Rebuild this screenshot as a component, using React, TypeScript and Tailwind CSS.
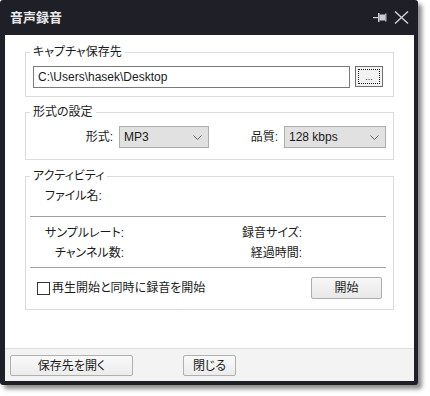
import React from "react";

function Chevron() {
  return (
    <svg width="9" height="5" viewBox="0 0 9 5" className="shrink-0">
      <path d="M0.5 0.5 L4.5 4.5 L8.5 0.5" fill="none" stroke="#606060" strokeWidth="1" />
    </svg>
  );
}

function Select({ value, w }: { value: string; w: string }) {
  return (
    <div className={`${w} h-[22px] bg-[#e1e1e1] border border-[#adadad] flex items-center pl-[4px] pr-[6px] justify-between`}>
      <span className="text-[12px] text-[#1a1a1a] leading-none">{value}</span>
      <Chevron />
    </div>
  );
}

export default function App() {
  return (
    <div className="w-[430px] h-[396px] bg-white font-['Liberation_Sans','Noto_Sans_CJK_JP',sans-serif] text-[12px] text-[#1a1a1a] [font-feature-settings:'palt']">
      <div className="w-[418px] h-[385px] bg-[#1f2027] rounded-[3px] flex flex-col pl-[5px] pr-[4px] pb-[4px] shadow-[4px_4px_4px_rgba(0,0,0,0.45)]">
        {/* Title bar */}
        <div className="h-[35px] shrink-0 flex items-center pl-[5px] pr-[5px] text-[#e9e9ec]">
          <span className="font-bold text-[13px] leading-none">音声録音</span>
          <div className="ml-auto flex items-center gap-[7px]">
            <svg width="14" height="11" viewBox="0 0 14 11">
              <rect x="0" y="5" width="5" height="1.2" fill="#cfcfd2" />
              <rect x="5" y="1" width="1.5" height="9" fill="#cfcfd2" />
              <rect x="6.5" y="2.5" width="5.5" height="6" fill="#cfcfd2" />
              <rect x="12" y="1.5" width="1.5" height="8" fill="#a9a9ad" />
            </svg>
            <svg width="15" height="13" viewBox="0 0 15 13">
              <path d="M1 0.5 L14 12.5 M14 0.5 L1 12.5" stroke="#d2d2d6" strokeWidth="1.4" fill="none" />
            </svg>
          </div>
        </div>

        {/* Content */}
        <div className="flex-1 bg-white flex flex-col">
          <div className="flex-1 px-[20px] pt-[10px]">
            {/* Group 1 */}
            <fieldset className="border border-[#dcdcdc] px-0">
              <legend className="ml-[4px] px-[3px] leading-[14px] text-[12px]">キャプチャ保存先</legend>
              <div className="pt-[7px] pl-[7px] pr-[10px] pb-[8px] flex items-start">
                <div className="w-[317px] h-[22px] border border-[#7a7a7a] flex items-center pl-[4px]">
                  <span className="text-[12px] leading-none [font-feature-settings:normal]">C:\Users\hasek\Desktop</span>
                </div>
                <div className="ml-[5px] w-[28px] h-[21px] border border-[#707070] bg-[#f2f2f2] p-[2px]">
                  <div className="w-full h-full border border-dotted border-[#1a1a1a] flex items-end justify-center">
                    <span className="text-[9px] leading-[11px] tracking-[0px]">...</span>
                  </div>
                </div>
              </div>
            </fieldset>

            {/* Group 2 */}
            <fieldset className="border border-[#dcdcdc] px-0 mt-[8px]">
              <legend className="ml-[4px] px-[3px] leading-[14px] text-[12px]">形式の設定</legend>
              <div className="pt-[7px] pb-[11px] flex items-center">
                <span className="w-[87px] text-right leading-none">形式:</span>
                <div className="ml-[6px]">
                  <Select value="MP3" w="w-[90px]" />
                </div>
                <span className="w-[69px] text-right leading-none">品質:</span>
                <div className="ml-[6px]">
                  <Select value="128 kbps" w="w-[102px]" />
                </div>
              </div>
            </fieldset>

            {/* Group 3 */}
            <fieldset className="border border-[#dcdcdc] px-0 mt-[9px]">
              <legend className="ml-[4px] px-[3px] leading-[14px] text-[12px]">アクティビティ</legend>
              <div className="pt-[4px] pb-[10px] flex flex-col">
                <div className="pl-[19px] leading-[18px] h-[18px]">ファイル名:</div>
                <div className="mt-[11px] ml-[4px] mr-[7px] h-px bg-[#a0a0a0]" />
                <div className="mt-[6px] grid grid-cols-[98px_178px] auto-rows-[20px] items-center">
                  <span className="text-right leading-[20px]">サンプルレート:</span>
                  <span className="text-right leading-[20px]">録音サイズ:</span>
                  <span className="text-right leading-[20px]">チャンネル数:</span>
                  <span className="text-right leading-[20px]">経過時間:</span>
                </div>
                <div className="mt-[4px] ml-[4px] mr-[7px] h-px bg-[#a0a0a0]" />
                <div className="mt-[9px] pl-[11px] pr-[11px] flex items-center h-[22px]">
                  <div className="w-[13px] h-[13px] border border-[#333333] bg-white" />
                  <span className="ml-[2px] leading-none">再生開始と同時に録音を開始</span>
                  <div className="ml-auto w-[71px] h-[22px] border border-[#adadad] rounded-[2px] bg-gradient-to-b from-[#f7f7f7] to-[#e8e8e8] flex items-center justify-center">
                    <span className="leading-none">開始</span>
                  </div>
                </div>
              </div>
            </fieldset>
          </div>

          {/* Footer */}
          <div className="h-[33px] shrink-0 border-t border-[#dedede] bg-[#f3f3f3] pt-[6px] pl-[5px] flex items-start">
            <div className="w-[123px] h-[21px] border border-[#b0b0b0] rounded-[2px] bg-gradient-to-b from-[#f9f9f9] to-[#ececec] flex items-center justify-center">
              <span className="leading-none">保存先を開く</span>
            </div>
            <div className="ml-[50px] w-[53px] h-[21px] border border-[#b0b0b0] rounded-[2px] bg-gradient-to-b from-[#f9f9f9] to-[#ececec] flex items-center justify-center">
              <span className="leading-none">閉じる</span>
            </div>
          </div>
        </div>
      </div>
    </div>
  );
}
